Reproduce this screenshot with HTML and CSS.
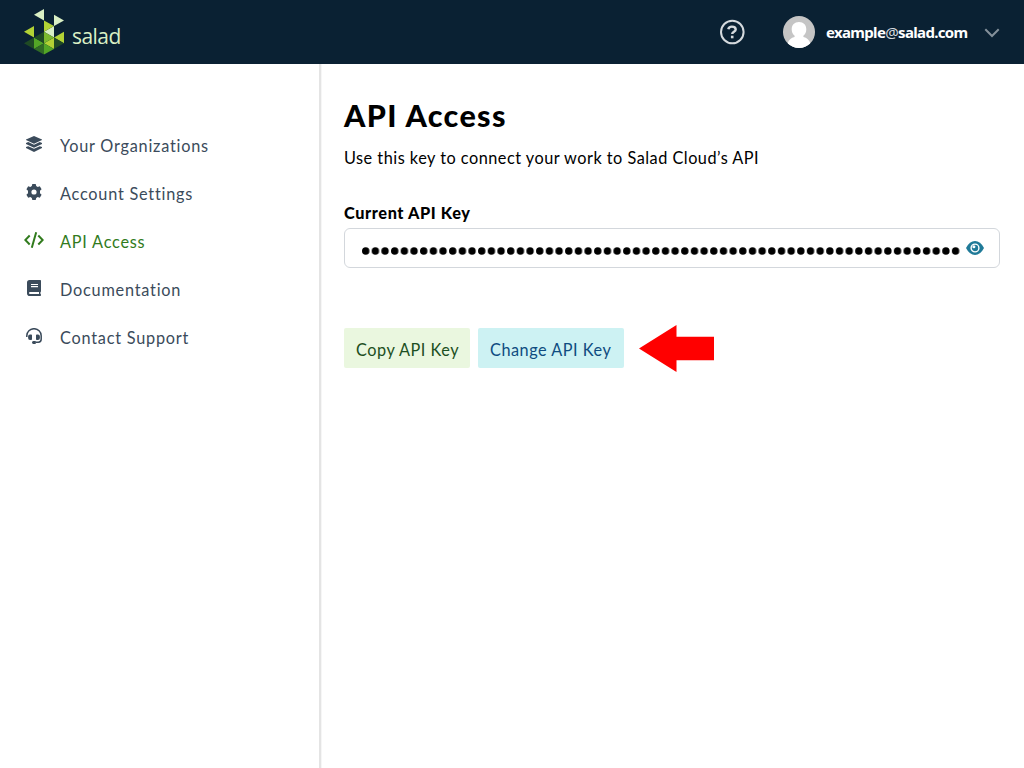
FILE: index.html
```html
<!DOCTYPE html>
<html lang="en">
<head>
<meta charset="utf-8">
<title>API Access</title>
<link rel="stylesheet" href="styles.css">
</head>
<body>
<header class="topbar">
  <a class="brand">
    <svg class="brand-mark" width="40" height="46" viewBox="0 0 40 46">
      <path fill="#d9efc4" d="M10 5.7 20 0v11.4zM30 5.7l10 5.7-10 5.7zM20 22.8l10-5.7v11.4z"/>
      <path fill="#b2d235" d="M20 11.4l10 5.7-10 5.7zM0 22.8l10-5.7v11.4zM30 28.5l10-5.7v11.4zM20 34.2l10-5.7v11.4z"/>
      <path fill="#53a626" d="M10 28.5l10 5.7-10 5.7zM20 34.2l10 5.7-10 5.7z"/>
      <path fill="#7bb92e" d="M20 22.8l10 5.700-10 5.700z"/>
      <path fill="#1f4a24" d="M10 28.5l10-5.7v11.4zM0 34.2l10-5.7v11.4zM30 28.5l10 5.7-10 5.7z"/>
      <path fill="#306b25" d="M10 39.9l10-5.7v11.4z"/>
    </svg>
    <span class="brand-name">salad</span>
  </a>
  <div class="account">
    <svg class="help" width="26" height="26" viewBox="0 0 26 26" fill="none" stroke="#d5dade">
      <circle cx="13.300" cy="13" r="11.3" stroke-width="2"/>
      <path stroke-width="2.4" d="M9.3 10.2c.3-1.700 1.500-2.600 3.600-2.600 2.300 0 3.800 1 3.800 2.800 0 2.400-3.500 2.300-3.500 4.700"/>
      <path stroke-width="2.6" d="M11.900 18h2.600"/>
    </svg>
    <svg class="avatar" width="32" height="32" viewBox="0 0 32 32">
      <defs><clipPath id="disc"><circle cx="16" cy="16" r="16"/></clipPath></defs>
      <g clip-path="url(#disc)">
        <path fill="#c5c5c5" d="M0 0h32v32H0z"/>
        <path fill="#fff" d="M16 6c4.500 0 7.300 3 7.300 7.200 0 2.800-1 5.200-2.900 6.500v1.200c3.500.8 6 2.900 6.800 6.100V32H4.800v-5c.8-3.200 3.300-5.300 6.800-6.100v-1.200c-1.900-1.300-2.900-3.700-2.900-6.500C8.700 9 11.500 6 16 6z"/>
      </g>
    </svg>
    <span class="email">example<span class="at">@</span>salad.com</span>
    <svg class="chevron" width="16" height="10" viewBox="0 0 16 10" fill="none" stroke="#84909a" stroke-width="2"><path d="M1.300 1.300 8 8l6.700-6.700"/></svg>
  </div>
</header>
<div class="page">
  <nav class="sidebar">
    <a class="item">
      <svg class="icon" width="20" height="16" viewBox="0 0 20 16" fill="currentColor"><path d="M10 0l8 3.400v.7L10 7.700 2 4.100v-.7zM2 7l2.200-.9L10 8.700l5.800-2.600L18 7v1L10 11.700 2 8zM2 11.100l2.200-.9L10 12.800l5.800-2.600 2.200.9v.9L10 15.900 2 12z"/></svg>
      <span>Your Organizations</span>
    </a>
    <a class="item">
      <svg class="icon" width="20" height="16" viewBox="0 0 20 16" fill="currentColor" fill-rule="evenodd"><path d="M8.300 0h3.400l.5 2.100 1.500.9 2.100-.7 1.800 3-1.600 1.500v2.400l1.600 1.500-1.800 3-2.100-.7-1.500.9-.5 2.100H8.300l-.5-2.100-1.500-.9-2.100.7-1.800-3L4 9.200V6.800L2.400 5.300l1.800-3 2.100.7 1.500-.9zM10 5.400a2.600 2.600 0 1 0 0 5.200 2.600 2.600 0 0 0 0-5.200z"/></svg>
      <span>Account Settings</span>
    </a>
    <a class="item active">
      <svg class="icon" width="20" height="16" viewBox="0 0 20 16" fill="none" stroke="currentColor" stroke-width="2"><path d="M5.700 3.500 1.300 8l4.400 4.500M14.300 3.500 18.700 8l-4.400 4.500M12.200.3 7.800 15.700"/></svg>
      <span>API Access</span>
    </a>
    <a class="item">
      <svg class="icon" width="20" height="16" viewBox="0 0 20 16" fill="currentColor" fill-rule="evenodd"><path d="M5.500 0H16.200q.8 0 .8.800v10.400q0 .5-.5.800-.3 1 0 2 .5.100.5.700v.5q0 .8-.8.800H5.800Q3 16 3 13.200V2.600Q3 0 5.500 0zM7 4v1.100h7V4zm0 2.100v1.100h7V6.100zM6 12q-1 0-1 1t1 1h9v-2z"/></svg>
      <span>Documentation</span>
    </a>
    <a class="item">
      <svg class="icon" width="20" height="16" viewBox="0 0 20 16" fill="none" stroke="currentColor" stroke-width="1.500"><path d="M2.800 9V7.700a7.200 7 0 0 1 14.400 0v3.600q0 2.900-2.900 2.900h-3"/><path fill="currentColor" stroke="none" d="M6 6.500h1.200q.8 0 .8.800v3.900q0 .8-.8.800H6q-1.900 0-1.900-1.900V8.400Q4.100 6.500 6 6.500zM14 6.500h-1.200q-.8 0-.8.800v3.900q0 .8.800.8H14q1.900 0 1.900-1.900V8.400q0-1.900-1.900-1.900zM9.300 13h2.400v2.900H9.300Q8 15.900 8 14.500T9.300 13z"/></svg>
      <span>Contact Support</span>
    </a>
  </nav>
  <main class="content">
    <h1 class="title">API Access</h1>
    <p class="lead">Use this key to connect your work to Salad Cloud’s API</p>
    <label class="label">Current API Key</label>
    <div class="field">
      <svg class="mask" width="600" height="8" viewBox="0 0 600 8">
        <defs><pattern id="dots" width="9.670" height="8" patternUnits="userSpaceOnUse"><ellipse cx="3.700" cy="4" rx="3.700" ry="3.800"/></pattern></defs>
        <path fill="url(#dots)" d="M0 0h599v8H0z"/>
      </svg>
      <svg class="eye" width="18" height="14" viewBox="0 0 18 14"><path fill="#1f7a98" d="M0 7Q3.600 0 9 0t9 7q-3.600 7-9 7T0 7z"/><circle cx="9" cy="7" r="3.900" fill="#1f7a98" stroke="#fff" stroke-width="1.400"/><circle cx="7.900" cy="5.700" r="1.500" fill="#fff"/></svg>
    </div>
    <div class="actions">
      <button class="btn copy">Copy API Key</button>
      <button class="btn change">Change API Key</button>
      <svg class="arrow" width="75" height="47" viewBox="0 0 75 47"><path fill="#f00" d="M0 23.500 37.500 0v11.800H75v23.500H37.500V47z"/></svg>
    </div>
  </main>
</div>
</body>
</html>
```
FILE: styles.css
```css
* { box-sizing: border-box; }
body {
  margin: 0;
  height: 768px;
  display: flex;
  flex-direction: column;
  overflow: hidden;
  background: #fff;
  color: #000;
  font: 16.300px/24px Lato, "Open Sans", sans-serif;
}
.topbar {
  height: 64px;
  flex: none;
  display: flex;
  justify-content: space-between;
  background: #0a2133;
  padding: 0 24px;
}
.brand { display: flex; padding-top: 9px; gap: 8px; }
.brand-name {
  color: #d9efc4;
  font: 21px/28px "Open Sans", sans-serif;
  letter-spacing: -0.550px;
  padding-top: 13px;
}
.account { display: flex; align-items: center; }
.help { margin-right: 38px; }
.avatar { margin-right: 11px; }
.email { color: #fff; font: 700 15px/24px "Noto Sans", sans-serif; width: 142px; letter-spacing: -0.660px; white-space: nowrap; }
.at { font-weight: 400; color: #d5dade; }
.chevron { margin: 1px 0 0 16px; }
.page { flex: 1; display: flex; }
.sidebar {
  width: 322px;
  flex: none;
  padding: 57px 24px 0;
  border-right: 1px solid #f6f6f6;
  box-shadow: inset -2px 0 #e4e4e4;
  color: #3b4b5b;
  letter-spacing: 0.770px;
}
.item { display: flex; height: 48px; align-items: center; gap: 16px; white-space: nowrap; }
.item span { padding-top: 2px; }
.icon { margin-top: -2px; }
.active { color: #317b1d; }
.content { flex: 1; padding: 32px 24px 0 22px; }
.title { margin: -1px 0 0; font-size: 30.500px; line-height: 40px; font-weight: 900; letter-spacing: 1.350px; }
.lead { margin: 11px 0 0; letter-spacing: 0.490px; white-space: nowrap; }
.label { display: block; margin-top: 31px; font-weight: 900; line-height: 24px; letter-spacing: 0.600px; }
.field {
  display: flex;
  align-items: center;
  height: 40px;
  margin-top: 3px;
  padding-left: 17px;
  border: 1px solid #d3d7dc;
  border-radius: 6px;
}
.mask { margin-top: 5px; }
.eye { margin-left: 4px; }
.actions { display: flex; margin-top: 60px; gap: 8px; }
.btn {
  height: 40px;
  padding: 4px 0 0 12px;
  border: 0;
  border-radius: 2px;
  font: inherit;
  letter-spacing: 0.510px;
  text-align: left;
  white-space: nowrap;
}
.copy { width: 126px; background: #eaf7df; color: #1c4f22; }
.change { width: 146px; background: #cdf2f3; color: #0f4c81; }
.arrow { margin: -3px 0 0 7px; }
```
